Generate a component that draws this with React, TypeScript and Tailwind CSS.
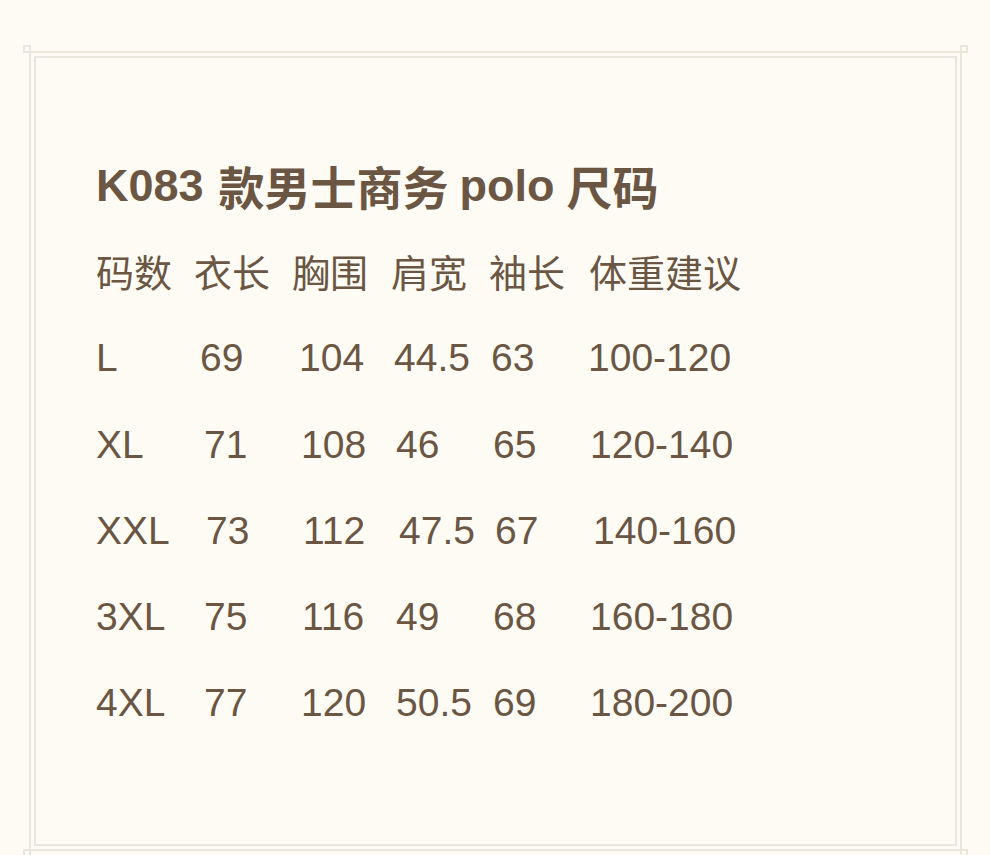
const FONT = "font-['Liberation_Sans','Noto_Sans_CJK_SC',sans-serif]";
const CJK = "font-['Noto_Sans_CJK_SC',sans-serif]";

type Row = {
  cells: string[];
  widths: string[];
};

// column starts drift a little from row to row, as in the original
const ROWS: Row[] = [
  { cells: ['L', '69', '104', '44.5', '63', '100-120'], widths: ['w-[104px]', 'w-[99px]', 'w-[95px]', 'w-[97px]', 'w-[97px]'] },
  { cells: ['XL', '71', '108', '46', '65', '120-140'], widths: ['w-[108px]', 'w-[97px]', 'w-[95px]', 'w-[97px]', 'w-[97px]'] },
  { cells: ['XXL', '73', '112', '47.5', '67', '140-160'], widths: ['w-[110px]', 'w-[97px]', 'w-[96px]', 'w-[96px]', 'w-[98px]'] },
  { cells: ['3XL', '75', '116', '49', '68', '160-180'], widths: ['w-[108px]', 'w-[98px]', 'w-[94px]', 'w-[97px]', 'w-[97px]'] },
  { cells: ['4XL', '77', '120', '50.5', '69', '180-200'], widths: ['w-[108px]', 'w-[97px]', 'w-[95px]', 'w-[97px]', 'w-[97px]'] },
];

const HEAD = ['码数', '衣长', '胸围', '肩宽', '袖长', '体重建议'];
const HEAD_W = ['w-[98px]', 'w-[98px]', 'w-[99px]', 'w-[98px]', 'w-[100px]'];

function Corner({ pos }: { pos: string }) {
  return <span className={`absolute w-[8px] h-[8px] border-2 border-[#ebe6dc] ${pos}`} />;
}

export default function App() {
  return (
    <div className={`w-full h-[855px] overflow-hidden bg-[#fefbf5] pt-[51px] pl-[29px] pr-[28px] ${FONT}`}>
      <div className="relative h-[800px] border-2 border-[#ebe6dc] p-[3px]">
        <Corner pos="-left-[8px] -top-[8px]" />
        <Corner pos="-right-[8px] -top-[8px]" />
        <Corner pos="-left-[8px] -bottom-[8px]" />
        <Corner pos="-right-[8px] -bottom-[8px]" />

        <div className="h-full border-2 border-[#ebe6dc] pt-[84px] pl-[60px] text-[#6a5643]">
          <h1 className="h-[86.3px] flex items-center font-bold leading-none whitespace-nowrap">
            <span className="text-[45px]">K083</span>
            <span className={`text-[46px] ml-[15px] ${CJK}`}>款男士商务</span>
            <span className="text-[45px] ml-[11px]">polo</span>
            <span className={`text-[46px] ml-[12px] ${CJK}`}>尺码</span>
          </h1>

          <div className={`h-[86.3px] flex items-center text-[38px] leading-none ${CJK}`}>
            {HEAD.map((h, i) => (
              <span key={h} className={`shrink-0 ${HEAD_W[i] ?? ''}`}>{h}</span>
            ))}
          </div>

          {ROWS.map((row) => (
            <div key={row.cells[0]} className="h-[86.3px] flex items-center text-[39px] leading-none">
              {row.cells.map((c, i) => (
                <span key={i} className={`shrink-0 ${row.widths[i] ?? ''}`}>{c}</span>
              ))}
            </div>
          ))}
        </div>
      </div>
    </div>
  );
}
